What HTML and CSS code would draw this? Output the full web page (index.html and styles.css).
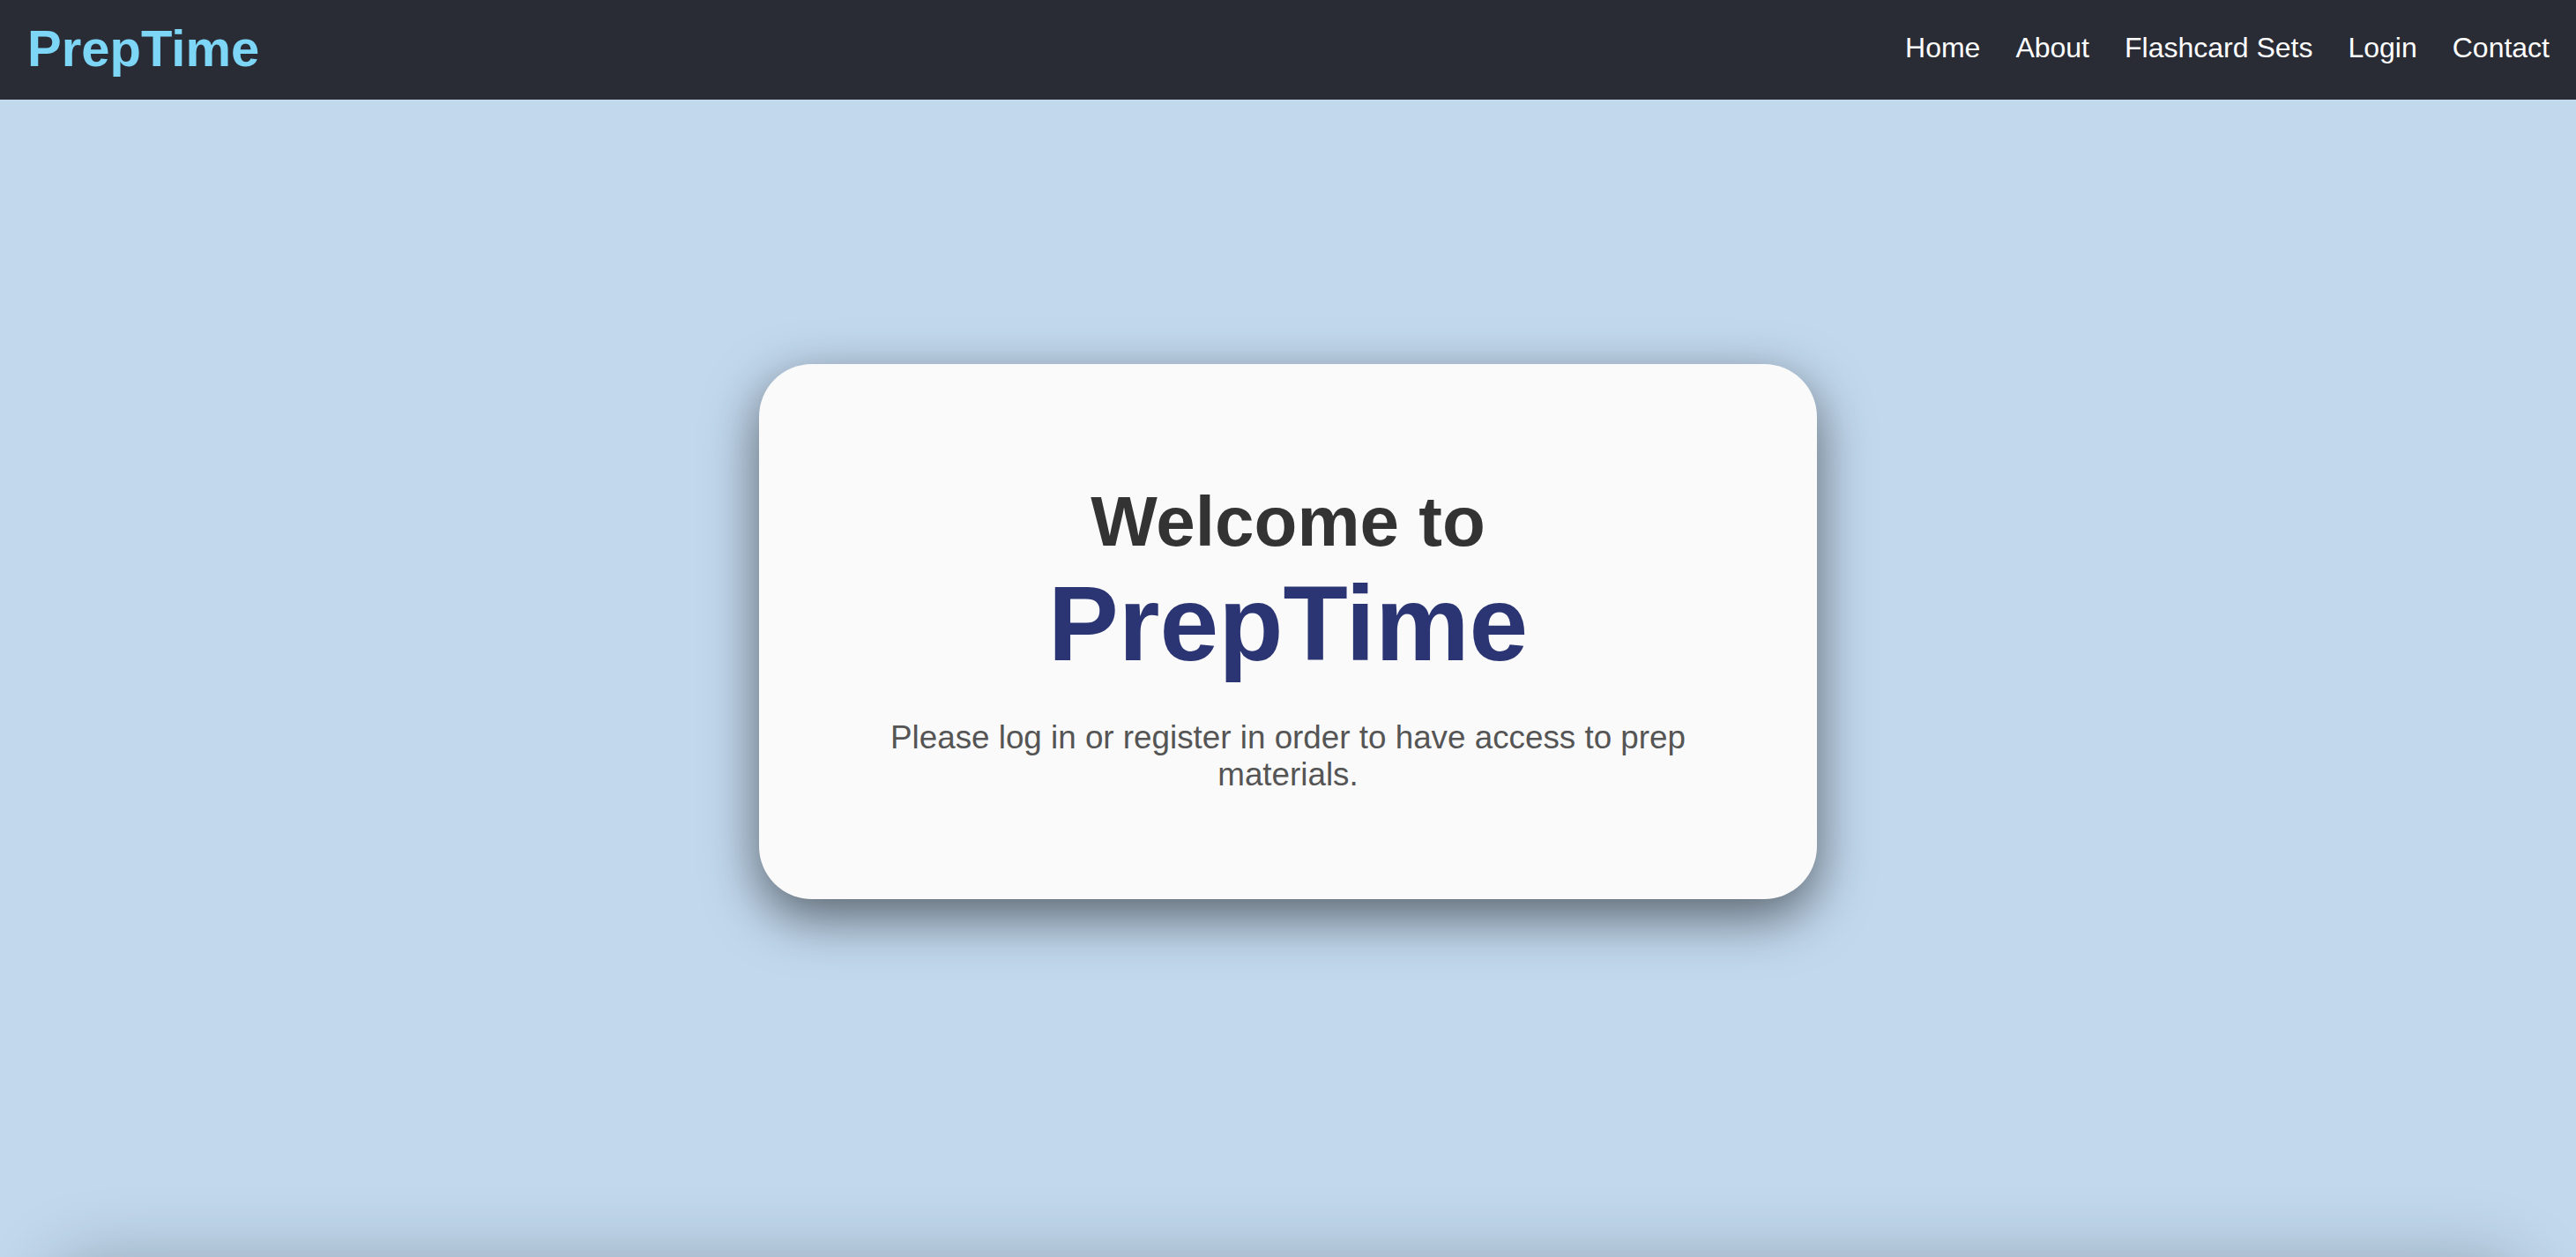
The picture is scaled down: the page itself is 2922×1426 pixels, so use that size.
FILE: index.html
```html
<!DOCTYPE html>
<html lang="en">
<head>
<meta charset="utf-8">
<title>PrepTime</title>
<link rel="stylesheet" href="styles.css">
</head>
<body>
<header class="navbar">
  <a class="logo" href="#">PrepTime</a>
  <nav class="nav-links">
    <a href="#">Home</a>
    <a href="#">About</a>
    <a href="#">Flashcard Sets</a>
    <a href="#">Login</a>
    <a href="#">Contact</a>
  </nav>
</header>
<main class="hero">
  <section class="card">
    <h1 class="welcome">Welcome to</h1>
    <div class="brand">PrepTime</div>
    <p class="lead">Please log in or register in order to have access to prep materials.</p>
  </section>
</main>
<footer class="footer"></footer>
</body>
</html>
```

FILE: styles.css
```css
html {
  scrollbar-width: none;
}
body {
  margin: 0;
  background: #c2d8ed;
  font-family: "Liberation Sans", Arial, Helvetica, sans-serif;
}
.navbar {
  height: 113px;
  box-sizing: border-box;
  background: #292c35;
  display: flex;
  align-items: center;
  justify-content: space-between;
  padding: 0 30px 0 31px;
}
.logo {
  color: #7dd6f5;
  font-weight: bold;
  font-size: 58px;
  text-decoration: none;
  margin-bottom: 5px;
}
.nav-links {
  display: flex;
  gap: 40px;
  margin-bottom: 5px;
}
.nav-links a {
  color: #ffffff;
  font-size: 32px;
  text-decoration: none;
}
.hero {
  height: calc(100vh - 113px);
  box-sizing: border-box;
  display: flex;
  justify-content: center;
  align-items: center;
  padding-bottom: 106px;
}
.card {
  width: 1200px;
  box-sizing: border-box;
  padding: 80px;
  background: #fafafa;
  border-radius: 60px;
  box-shadow: 0 20px 60px rgba(0, 0, 0, 0.55);
  text-align: center;
}
.welcome {
  margin: 53.6px 0 0;
  font-size: 80px;
  font-weight: bold;
  color: #333333;
}
.brand {
  font-size: 120px;
  font-weight: bold;
  color: #2b3573;
}
.lead {
  margin: 40px 0;
  font-size: 36.8px;
  color: #555555;
}
.footer {
  height: 120px;
  margin: 0 50px;
  border-radius: 60px;
  background: #c2d8ed;
  box-shadow: 0 0 80px rgba(0, 0, 0, 0.22);
}
```
